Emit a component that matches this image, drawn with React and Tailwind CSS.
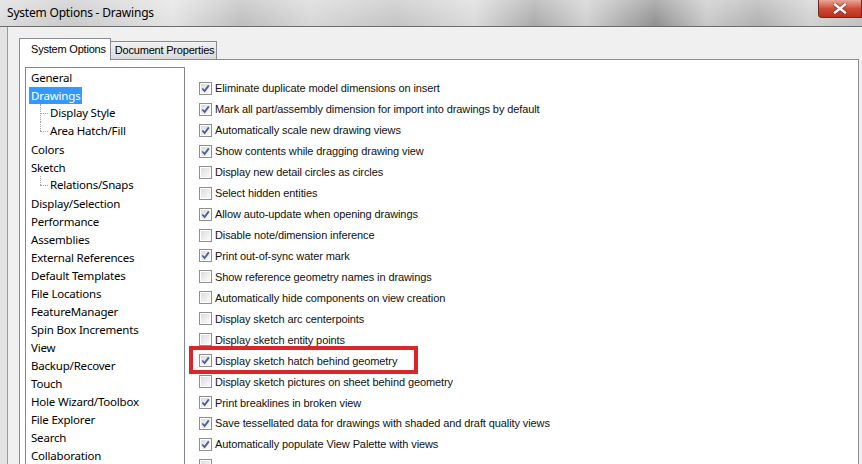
import React from 'react';

const treeItems = [
  { label: 'General' },
  { label: 'Drawings', selected: true },
  { label: 'Display Style', child: true },
  { label: 'Area Hatch/Fill', child: true, last: true },
  { label: 'Colors' },
  { label: 'Sketch' },
  { label: 'Relations/Snaps', child: true, last: true },
  { label: 'Display/Selection' },
  { label: 'Performance' },
  { label: 'Assemblies' },
  { label: 'External References' },
  { label: 'Default Templates' },
  { label: 'File Locations' },
  { label: 'FeatureManager' },
  { label: 'Spin Box Increments' },
  { label: 'View' },
  { label: 'Backup/Recover' },
  { label: 'Touch' },
  { label: 'Hole Wizard/Toolbox' },
  { label: 'File Explorer' },
  { label: 'Search' },
  { label: 'Collaboration' },
];

const options = [
  ['Eliminate duplicate model dimensions on insert', true],
  ['Mark all part/assembly dimension for import into drawings by default', true],
  ['Automatically scale new drawing views', true],
  ['Show contents while dragging drawing view', true],
  ['Display new detail circles as circles', false],
  ['Select hidden entities', false],
  ['Allow auto-update when opening drawings', true],
  ['Disable note/dimension inference', false],
  ['Print out-of-sync water mark', true],
  ['Show reference geometry names in drawings', false],
  ['Automatically hide components on view creation', false],
  ['Display sketch arc centerpoints', false],
  ['Display sketch entity points', false],
  ['Display sketch hatch behind geometry', true, true],
  ['Display sketch pictures on sheet behind geometry', false],
  ['Print breaklines in broken view', true],
  ['Save tessellated data for drawings with shaded and draft quality views', true],
  ['Automatically populate View Palette with views', true],
  ['', false],
];

function Checkbox({ checked }) {
  return (
    <div className="w-[13px] h-[13px] border border-[#8e8f8f] bg-white p-[1px] shrink-0">
      <div className="w-full h-full bg-gradient-to-br from-[#dcdcdc] to-[#fbfbfb] relative">
        {checked && (
          <svg viewBox="0 0 9 9" className="absolute inset-0 w-[9px] h-[9px]">
            <path d="M1.3 4.5 L3.6 7 L7.8 1.4" fill="none" stroke="#4a5f97" strokeWidth="1.8" />
          </svg>
        )}
      </div>
    </div>
  );
}

function TreeRow({ item }) {
  if (item.child) {
    return (
      <div className="h-[18px] flex items-center relative">
        <div
          className={`absolute left-[11px] top-0 w-0 border-l border-dotted border-[#a0a0a0] ${
            item.last ? 'h-[9px]' : 'h-[18px]'
          }`}
        />
        <div className="absolute left-[11px] top-[9px] w-[8px] border-t border-dotted border-[#a0a0a0]" />
        <span className="ml-[21px] text-[11.5px] tracking-[-0.2px] text-black leading-[18px] whitespace-nowrap">
          {item.label}
        </span>
      </div>
    );
  }
  return (
    <div className="h-[18px] flex items-center">
      <span
        className={`px-[2px] text-[11.5px] tracking-[-0.2px] leading-[17px] whitespace-nowrap ${
          item.selected ? 'bg-[#3399ff] text-white' : 'text-black'
        }`}
      >
        {item.label}
      </span>
    </div>
  );
}

export default function App() {
  return (
    <div className="w-[862px] h-[464px] overflow-hidden relative bg-[#f0f0f0] font-['Noto_Sans',sans-serif]">
      {/* title bar */}
      <div className="h-[27px] relative border-b border-[#6d6d6d] bg-[linear-gradient(90deg,#dcdcdc_0%,#c9c9c9_8%,#e2e2e2_20%,#bdbdbd_28%,#d6d6d6_36%,#c4c4c4_46%,#dadada_55%,#a9a9a9_62%,#cfcfcf_68%,#8f8f8f_76%,#c8c8c8_82%,#b0b0b0_88%,#d0d0d0_94%,#c0c0c0_100%)]">
        <div className="absolute inset-0 bg-gradient-to-b from-white/30 to-white/0" />
        <span className="absolute left-[7px] top-[4px] text-[12px] tracking-[-0.2px] text-black leading-[18px]">
          System Options - Drawings
        </span>
        <div className="absolute right-0 top-0 w-[44px] h-[18px] rounded-bl-[4px] border border-t-0 border-[#6b2a22] bg-gradient-to-b from-[#e9a597] via-[#cf4b36] to-[#b8301c] flex items-center justify-center">
          <svg viewBox="0 0 14 11" className="w-[14px] h-[11px]">
            <path d="M2 1.5 L12 9.5 M12 1.5 L2 9.5" stroke="#5a1a10" strokeWidth="4" strokeLinecap="square" opacity="0.55" />
            <path d="M2 1.5 L12 9.5 M12 1.5 L2 9.5" stroke="#ffffff" strokeWidth="2.4" strokeLinecap="square" />
          </svg>
        </div>
      </div>

      {/* body */}
      <div className="flex h-[437px]">
        <div className="w-[8px] shrink-0 bg-[#e3e3e3] border-r border-[#9a9a9a]" />
        <div className="flex-1 pt-[11px] pl-[11px] pr-[3px] flex flex-col">
          {/* tabs */}
          <div className="flex items-end h-[21px] relative z-10 font-['Liberation_Sans',sans-serif] text-[11px] tracking-[-0.2px] text-black">
            <div className="h-[22px] mb-[-1px] pl-[11px] pr-[4px] bg-white border border-b-0 border-[#898c95] flex items-center">
              <span className="whitespace-nowrap">System Options</span>
            </div>
            <div className="h-[18px] pl-[4px] pr-[2px] bg-gradient-to-b from-[#f2f2f2] to-[#d9d9d9] border border-l-0 border-b-0 border-[#898c95] flex items-center">
              <span className="whitespace-nowrap">Document Properties</span>
            </div>
          </div>
          {/* panel */}
          <div className="flex-1 bg-white border border-[#898c95] border-b-0 flex pt-[7px] pl-[5px]">
            <div className="w-[160px] shrink-0 border border-[#828790] border-b-0 pl-[3px]">
              {treeItems.map((item) => (
                <TreeRow key={item.label} item={item} />
              ))}
            </div>
            <div className="flex-1 relative pt-[11px] pl-[14px] font-['Liberation_Sans',sans-serif]">
              {options.map(([label, checked, highlight], i) => (
                <div key={i} className="h-[20.95px] flex items-center gap-[3px] relative">
                  <Checkbox checked={checked} />
                  <span className="text-[11px] tracking-[-0.1px] text-[#111] whitespace-nowrap leading-[16px]">
                    {label}
                  </span>
                  {highlight && (
                    <div className="absolute left-[-10px] top-[-4px] w-[229px] h-[28px] border-[4px] border-[#d9262b]" />
                  )}
                </div>
              ))}
            </div>
          </div>
        </div>
      </div>
    </div>
  );
}
